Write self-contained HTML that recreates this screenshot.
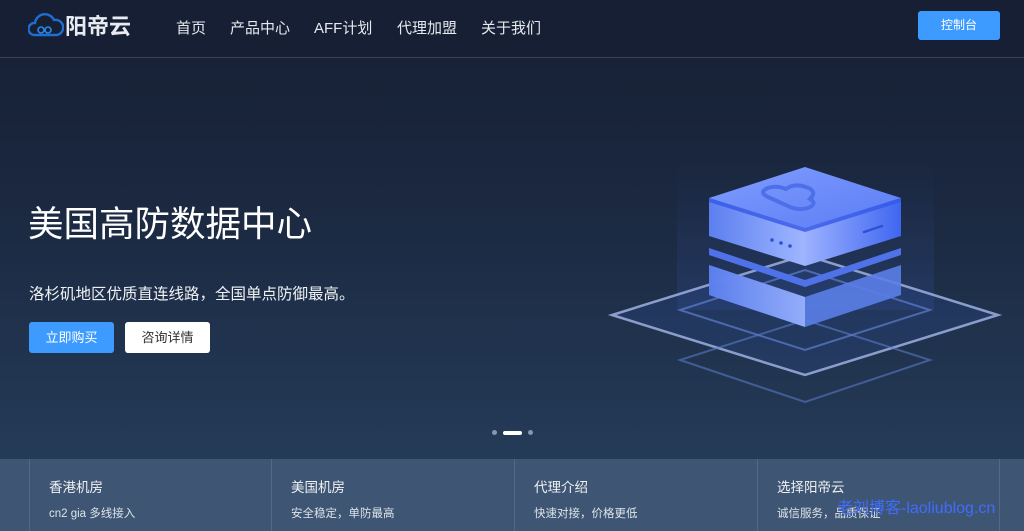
<!DOCTYPE html>
<html><head><meta charset="utf-8"><style>
*{margin:0;padding:0;box-sizing:border-box}
body{width:1024px;height:531px;overflow:hidden;font-family:"Liberation Sans","Noto Sans CJK SC",sans-serif;background:linear-gradient(180deg,#161f33 0px,#1b2840 200px,#243b58 459px);position:relative;color:#fff}
.hdr{position:absolute;left:0;top:0;width:1024px;height:58px;background:#161f34;border-bottom:1px solid #38435a}
.logo{position:absolute;left:28px;top:9px;display:flex;align-items:center}
.logo span{font-size:22px;font-weight:bold;color:#e8ecf2;margin-left:1px}
.nav{position:absolute;top:17px;font-size:15px;color:#e6e9ee}
.btnc{position:absolute;left:918px;top:11px;width:82px;height:29px;background:#3d9bff;border-radius:3px;font-size:12px;text-align:center;line-height:29px}
h1{position:absolute;left:28px;top:196px;font-size:35.5px;font-weight:normal}
.sub{position:absolute;left:29px;top:282px;font-size:15.5px;color:#f0f2f5}
.b1{position:absolute;left:29px;top:322px;width:85px;height:31px;background:#3d9bff;border-radius:3px;font-size:13px;text-align:center;line-height:31px}
.b2{position:absolute;left:125px;top:322px;width:85px;height:31px;background:#fff;border-radius:3px;font-size:13px;color:#333;text-align:center;line-height:31px}
.dots{position:absolute;top:430px;left:492px;display:flex;gap:6px;align-items:center}
.dots i{display:block;width:5px;height:5px;border-radius:3px;background:#8a96a8}
.dots i.a{width:19px;height:4px;background:#fff}
.bar{position:absolute;left:0;top:459px;width:1024px;height:72px;background:#3e5673}
.col{position:absolute;top:0;height:72px;border-left:1px solid #54698a;padding:17px 0 0 19px}
.col b{display:block;font-weight:normal;font-size:13.5px;color:#f0f2f5}
.col s{display:block;text-decoration:none;font-size:11.5px;color:#dde3ea;margin-top:9px}
.wm{position:absolute;left:837px;top:494px;font-size:16px;color:#3f6cff}
</style></head><body>
<div class="hdr">
<div class="logo"><svg width="36" height="30" viewBox="0 0 36 30"><path d="M6 25 A6 6 0 0 1 7 13 A10 10 0 0 1 26 10 A7.5 7.5 0 0 1 29 25 Z" fill="none" stroke="#1f6fd0" stroke-width="2.4"/><circle cx="13" cy="20" r="3" fill="none" stroke="#2a86e8" stroke-width="1.6"/><circle cx="20" cy="20" r="3" fill="none" stroke="#2a86e8" stroke-width="1.6"/></svg><span>阳帝云</span></div>
<div class="nav" style="left:176px">首页</div>
<div class="nav" style="left:230px">产品中心</div>
<div class="nav" style="left:314px">AFF计划</div>
<div class="nav" style="left:397px">代理加盟</div>
<div class="nav" style="left:481px">关于我们</div>
<div class="btnc">控制台</div>
</div>
<h1>美国高防数据中心</h1>
<div class="sub">洛杉矶地区优质直连线路，全国单点防御最高。</div>
<div class="b1">立即购买</div>
<div class="b2">咨询详情</div>
<svg style="position:absolute;left:600px;top:140px" width="420" height="280" viewBox="0 0 420 280">
<defs>
<linearGradient id="gl" x1="0" x2="1"><stop offset="0" stop-color="#5c7ff0"/><stop offset="1" stop-color="#9fb6ff"/></linearGradient>
<linearGradient id="gr" x1="0" x2="1"><stop offset="0" stop-color="#9cb2ff"/><stop offset="1" stop-color="#3f66f0"/></linearGradient>
<linearGradient id="gt" x1="0" y1="0" x2="1" y2="1"><stop offset="0" stop-color="#7f9cff"/><stop offset="1" stop-color="#5b7df5"/></linearGradient>
<linearGradient id="glow" x1="0" y1="0" x2="0" y2="1"><stop offset="0" stop-color="#3a5fc8" stop-opacity="0"/><stop offset="1" stop-color="#3a5fc8" stop-opacity=".35"/></linearGradient>
</defs>
<rect x="77" y="20" width="257" height="150" fill="url(#glow)" opacity=".5"/>
<polygon points="12,175 205,235 398,175 205,115" fill="#2a4a8a" opacity=".3"/>
<polygon points="12,175 205,235 398,175 205,115" fill="none" stroke="#9fb0e0" stroke-width="2.5" opacity=".85"/>
<polygon points="80,170 205,210 330,170 205,130" fill="none" stroke="#5e7fd0" stroke-width="2" opacity=".7"/>
<polygon points="80,220 205,262 330,220 205,180" fill="none" stroke="#5e7fd0" stroke-width="2" opacity=".55"/>
<polygon points="109,125 205,157 301,125 301,155 205,187 109,155" fill="#5b7ee8" opacity=".9"/>
<polygon points="109,125 205,157 205,187 109,155" fill="url(#gl)" opacity=".85"/>
<polygon points="109,108 205,140 301,108 301,115 205,147 109,115" fill="#4f72e8"/>
<polygon points="109,58 205,27 301,58 205,88" fill="url(#gt)"/>
<polygon points="109,58 205,88 205,126 109,96" fill="url(#gl)"/>
<polygon points="205,88 301,58 301,96 205,126" fill="url(#gr)"/>
<polygon points="109,58 205,88 301,58 301,62 205,92 109,62" fill="#3558e8" opacity=".8"/>
<path d="M168,57 q-10,-5 0,-9 q8,-3 18,1 q8,-6 20,-2 q12,4 4,12 q8,5 -2,9 q-10,3 -20,-2 Z" fill="none" stroke="#4d6fe8" stroke-width="4"/>
<circle cx="172" cy="100" r="1.8" fill="#2f4fd8"/><circle cx="181" cy="103" r="1.8" fill="#2f4fd8"/><circle cx="190" cy="106" r="1.8" fill="#2f4fd8"/>
<line x1="264" y1="92" x2="282" y2="86" stroke="#2f4fd8" stroke-width="2.5" stroke-linecap="round"/>
</svg>
<div class="dots"><i></i><i class="a"></i><i></i></div>
<div class="bar">
<div class="col" style="left:29px;width:243px"><b>香港机房</b><s>cn2 gia 多线接入</s></div>
<div class="col" style="left:271px;width:243px"><b>美国机房</b><s>安全稳定，单防最高</s></div>
<div class="col" style="left:514px;width:243px"><b>代理介绍</b><s>快速对接，价格更低</s></div>
<div class="col" style="left:757px;width:243px;border-right:1px solid #54698a"><b>选择阳帝云</b><s>诚信服务，品质保证</s></div>
</div>
<div class="wm">老刘博客-laoliublog.cn</div>
</body></html>
